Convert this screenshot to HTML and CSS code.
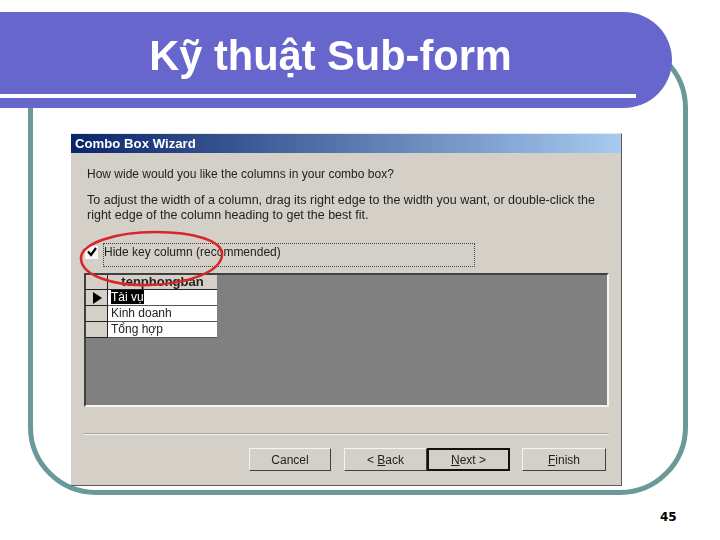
FILE: index.html
```html
<!DOCTYPE html>
<html lang="vi">
<head>
<meta charset="utf-8">
<title>Kỹ thuật Sub-form</title>
<link rel="stylesheet" href="styles.css">
</head>
<body>
<main class="slide">
  <div class="frame"></div>
  <section class="dialog">
    <div class="titlebar">Combo Box Wizard</div>
    <div class="content">
      <p class="question">How wide would you like the columns in your combo box?</p>
      <p class="help">To adjust the width of a column, drag its right edge to the width you want, or double-click the<br>right edge of the column heading to get the best fit.</p>
      <div class="check-row">
        <span class="checkbox">
          <svg viewBox="0 0 12 12" width="12" height="12"><path d="M2 5.5 L5 9 L10 2" fill="none" stroke="#000" stroke-width="2.2"/></svg>
        </span>
        <span class="check-label">Hide key column (recommended)</span>
      </div>
      <div class="grid">
        <div class="grid-table">
          <div class="selector"></div><div class="head">tenphongban</div>
          <div class="selector"><svg viewBox="0 0 10 12" width="10" height="12"><path d="M1 0 L10 6 L1 12 Z" fill="#000"/></svg></div><div class="cell"><span class="selected">Tài vụ</span></div>
          <div class="selector"></div><div class="cell">Kinh doanh</div>
          <div class="selector"></div><div class="cell">Tổng hợp</div>
        </div>
      </div>
      <div class="separator"></div>
      <div class="buttons">
        <span class="btn">Cancel</span>
        <div class="btn-pair">
          <span class="btn"><span>&lt; <u>B</u>ack</span></span>
          <span class="btn default"><span><u>N</u>ext &gt;</span></span>
        </div>
        <span class="btn"><span><u>F</u>inish</span></span>
      </div>
    </div>
  </section>
  <svg class="circle" viewBox="0 0 150 60" width="150" height="60">
    <path d="M2 31 C1 15 38 4 76 4 C116 4 144 13 143 27 C142 43 111 56 70 57 C35 58 3 48 2 31 Z" fill="none" stroke="#d9262c" stroke-width="2.6"/>
  </svg>
  <header class="banner">
    <h1>Kỹ thuật Sub-form</h1>
    <div class="rule"></div>
  </header>
  <div class="page-no">45</div>
</main>
</body>
</html>
```
FILE: styles.css
```css
html, body { margin: 0; padding: 0; background: #fff; }
.slide { position: relative; width: 720px; height: 540px; overflow: hidden; font-family: "Liberation Sans", Arial, sans-serif; }
.frame { position: absolute; left: 28px; top: 40px; width: 650px; height: 445px; border: 5px solid #6b9999; border-radius: 68px; }
.banner { position: absolute; left: 0; top: 12px; width: 672px; height: 96px; background: #6666cc; border-radius: 0 50px 50px 0; }
.banner h1 { margin: 0; padding-top: 21px; width: 661px; height: 62px; box-sizing: border-box; text-align: center; color: #fff; font-size: 42px; line-height: 46px; font-weight: 700; transform: scaleX(.99); }
.rule { width: 636px; height: 4px; background: #fff; margin-top: 20px; }
.dialog { position: absolute; left: 71px; top: 133px; width: 551px; height: 353px; box-sizing: border-box; background: #d4d0c8; border-top: 1px solid #e8e6e0; border-right: 1px solid #5a5a5a; border-bottom: 1px solid #5a5a5a; filter: blur(.4px); font-size: 12px; color: #222; }
.titlebar { height: 19px; line-height: 19px; padding-left: 4px; color: #fff; font-weight: 700; font-size: 13.2px; background: linear-gradient(90deg, #0a246a, #a6caf0); }
.content { padding: 0 13px; }
.question { margin: 0; padding: 14px 0 0 3px; line-height: 15px; }
.help { margin: 0; padding: 11px 0 0 3px; line-height: 14.5px; font-size: 12.5px; }
.check-row { display: flex; align-items: center; gap: 5px; margin-top: 21px; height: 24px; margin-left: 1px; }
.checkbox { width: 13px; height: 13px; background: #f8f8f4; display: flex; align-items: center; justify-content: center; margin-top: -6px; }
.check-label { flex: none; width: 372px; height: 24px; box-sizing: border-box; border: 1px dotted #444; line-height: 17px; font-size: 12px; }
.grid { width: 525px; height: 134px; margin-top: 6px; box-sizing: border-box; background: #808080; border: 2px solid; border-color: #404040 #f4f4f0 #f4f4f0 #404040; }
.grid-table { display: grid; grid-template-columns: 22px 109px; grid-template-rows: 15px 16px 16px 16px; width: 131px; background: #404040; }
.selector { background: #d4d0c8; display: flex; align-items: center; justify-content: center; border-right: 1px solid #222; border-bottom: 1px solid #222; box-sizing: border-box; }
.head { background: #d4d0c8; text-align: center; font-weight: 700; font-size: 13px; line-height: 14px; border-bottom: 1px solid #222; box-sizing: border-box; }
.cell { background: #fff; font-size: 12px; line-height: 15px; padding-left: 3px; border-bottom: 1px solid #555; box-sizing: border-box; }
.selected { background: #000; color: #fff; }
.separator { height: 2px; margin-top: 26px; width: 525px; background: linear-gradient(#a8a49c 50%, #f4f2ec 50%); }
.buttons { display: grid; grid-template-columns: 82px 167px 84px; column-gap: 12px; justify-content: end; margin-top: 13px; width: 522px; }
.btn-pair { display: flex; margin-left: 1px; }
.btn { flex: none; width: auto; height: 23px; box-sizing: border-box; display: flex; align-items: center; justify-content: center; border: 1px solid; border-color: #f4f4f0 #404040 #404040 #f4f4f0; font-size: 12px; }
.btn-pair .btn { width: 83px; }
.btn.default { border: 2px solid #111; }
.circle { position: absolute; left: 79px; top: 228px; }
.page-no { position: absolute; left: 660px; top: 510px; font-size: 12px; font-weight: 700; line-height: 14px; color: #000; font-family: "DejaVu Sans", sans-serif; }
```
